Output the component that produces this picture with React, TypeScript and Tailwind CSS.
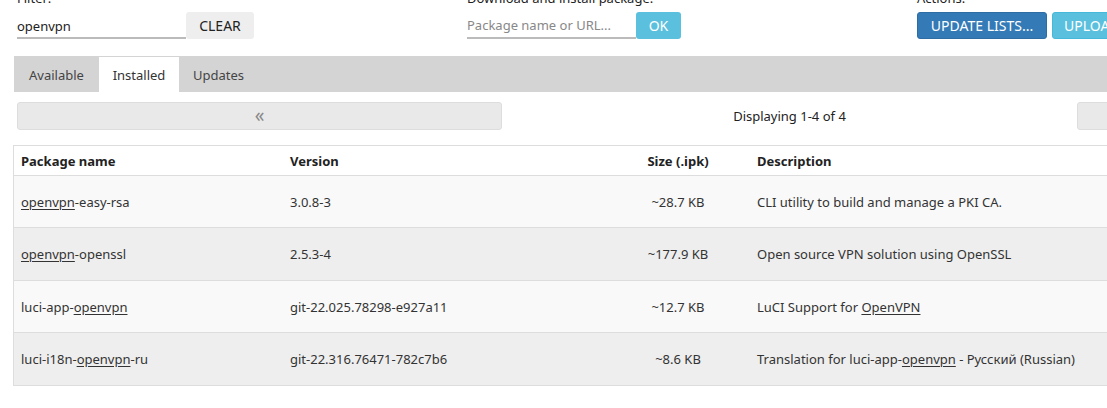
import React from "react";

const font = { fontFamily: '"Noto Sans", "Open Sans", sans-serif' };

function U({ children }: { children: React.ReactNode }) {
  return <span className="underline underline-offset-2">{children}</span>;
}

const rows: { name: React.ReactNode; ver: string; size: string; desc: React.ReactNode; h: string }[] = [
  { name: <><U>openvpn</U>-easy-rsa</>, ver: "3.0.8-3", size: "~28.7 KB", desc: "CLI utility to build and manage a PKI CA.", h: "h-[52px]" },
  { name: <><U>openvpn</U>-openssl</>, ver: "2.5.3-4", size: "~177.9 KB", desc: "Open source VPN solution using OpenSSL", h: "h-[53px]" },
  { name: <>luci-app-<U>openvpn</U></>, ver: "git-22.025.78298-e927a11", size: "~12.7 KB", desc: <>LuCI Support for <U>OpenVPN</U></>, h: "h-[52px]" },
  { name: <>luci-i18n-<U>openvpn</U>-ru</>, ver: "git-22.316.76471-782c7b6", size: "~8.6 KB", desc: <>Translation for luci-app-<U>openvpn</U> - Русский (Russian)</>, h: "h-[52px]" },
];

export default function App() {
  return (
    <div className="w-[1107px] h-[408px] overflow-hidden bg-white text-[#333] text-[13px]" style={font}>
      <div className="w-[1600px]">
        {/* top controls */}
        <div className="h-[56px] overflow-hidden">
          <div className="-mt-[10px] flex pl-[17px]">
            <div className="w-[450px] flex flex-col gap-[5px]">
              <div className="leading-[17px] text-[#222]">Filter:</div>
              <div className="flex">
                <div className="w-[169px] h-[27px] border-b-2 border-[#bbb] flex items-center pt-[4px] text-[#222]">openvpn</div>
                <div className="w-[68px] h-[27px] bg-[#eeeeee] rounded-[3px] flex items-center justify-center text-[14px] text-[#222]">CLEAR</div>
              </div>
            </div>
            <div className="w-[450px] flex flex-col gap-[5px]">
              <div className="leading-[17px] text-[#222]">Download and install package:</div>
              <div className="flex">
                <div className="w-[169px] h-[27px] border-b-2 border-[#bbb] flex items-center pt-[2px] text-[#888]">Package name or URL...</div>
                <div className="w-[45px] h-[27px] bg-[#5bc0de] rounded-[3px] flex items-center justify-center text-[14px] text-white">OK</div>
              </div>
            </div>
            <div className="w-[450px] flex flex-col gap-[5px]">
              <div className="leading-[17px] text-[#222]">Actions:</div>
              <div className="flex gap-[5px]">
                <div className="w-[130px] h-[27px] bg-[#337ab7] border border-[#2e6da4] rounded-[3px] flex items-center justify-center text-[14px] text-white whitespace-nowrap">UPDATE LISTS...</div>
                <div className="w-[150px] h-[27px] bg-[#5bc0de] border border-[#46b8da] rounded-[3px] flex items-center pl-[11px] text-[14px] text-white whitespace-nowrap overflow-hidden">UPLOAD PACKAGE...</div>
              </div>
            </div>
          </div>
        </div>

        {/* tabs */}
        <div className="ml-[14px] h-[36px] bg-[#d4d4d4] flex items-end">
          <div className="w-[85px] h-[35px] flex items-center justify-center pt-[3px] text-[#444]">Available</div>
          <div className="w-[80px] h-[35px] bg-white flex items-center justify-center pt-[3px] text-[#333]">Installed</div>
          <div className="w-[79px] h-[35px] flex items-center justify-center pt-[3px] text-[#444]">Updates</div>
        </div>

        {/* pager */}
        <div className="ml-[17px] mt-[10px] flex items-center h-[28px]">
          <div className="w-[485px] h-[28px] bg-[#e9e9e9] border border-[#dddddd] rounded-[3px] flex items-center justify-center text-[#888] text-[19px] leading-none pb-[2px]">«</div>
          <div className="w-[575px] text-center text-[#222] pt-[1px]">Displaying 1-4 of 4</div>
          <div className="w-[485px] h-[28px] bg-[#e9e9e9] border border-[#dddddd] rounded-[3px] flex items-center justify-center text-[#888] text-[19px] leading-none pb-[2px]">»</div>
        </div>

        {/* table */}
        <div className="ml-[13px] mt-[15px] w-[1560px] border border-[#dddddd] border-r-0">
          <div className="flex h-[30px] items-center pt-[3px] font-bold text-[#222] border-b border-[#dddddd] bg-white">
            <div className="w-[269px] pl-[7px]">Package name</div>
            <div className="w-[324px] pl-[7px]">Version</div>
            <div className="w-[142px] text-center">Size (.ipk)</div>
            <div className="flex-1 pl-[8px]">Description</div>
          </div>
          {rows.map((r, i) => (
            <div
              key={i}
              className={`flex ${r.h} items-center pt-[2px] ${i < rows.length - 1 ? "border-b border-[#dddddd]" : ""} ${i % 2 === 0 ? "bg-[#f9f9f9]" : "bg-[#eeeeee]"}`}
            >
              <div className="w-[269px] pl-[7px]">{r.name}</div>
              <div className="w-[324px] pl-[7px]">{r.ver}</div>
              <div className="w-[142px] text-center">{r.size}</div>
              <div className="flex-1 pl-[8px]">{r.desc}</div>
            </div>
          ))}
        </div>
      </div>
    </div>
  );
}
